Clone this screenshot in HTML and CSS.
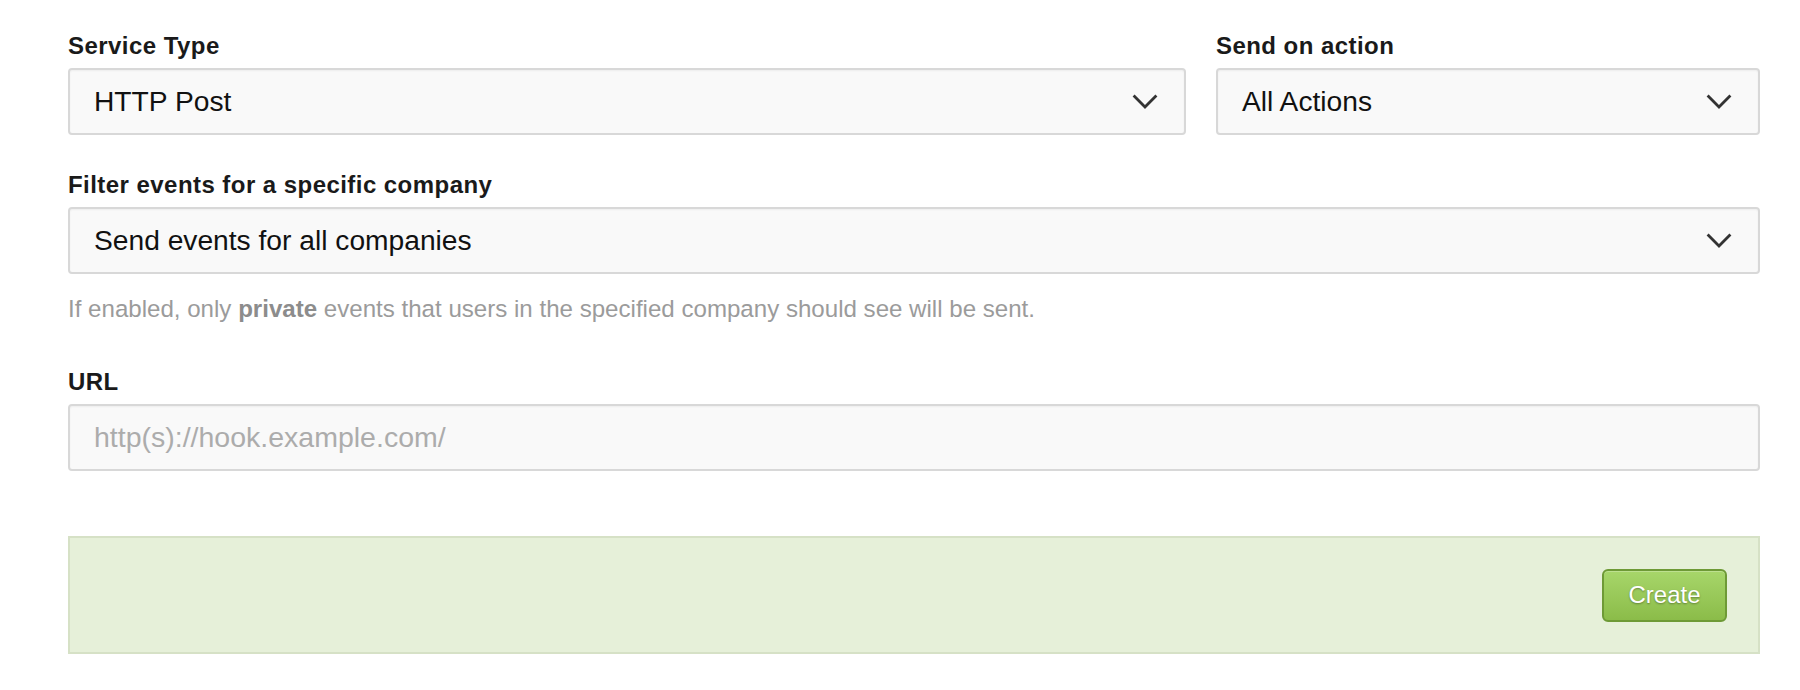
FILE: index.html
```html
<!DOCTYPE html>
<html lang="en">
<head>
<meta charset="utf-8">
<title>Webhook</title>
<link rel="stylesheet" href="styles.css">
</head>
<body>
<form class="form">
  <div class="row">
    <div class="field col-wide">
      <label class="label">Service Type</label>
      <div class="select">
        <span class="select-text">HTTP Post</span>
        <svg class="chevron" width="26" height="15" viewBox="0 0 26 15"><path d="M1.6 1.6 L13 13 L24.4 1.6" fill="none" stroke="#333" stroke-width="2.8"/></svg>
      </div>
    </div>
    <div class="field col-narrow">
      <label class="label">Send on action</label>
      <div class="select">
        <span class="select-text">All Actions</span>
        <svg class="chevron" width="26" height="15" viewBox="0 0 26 15"><path d="M1.6 1.6 L13 13 L24.4 1.6" fill="none" stroke="#333" stroke-width="2.8"/></svg>
      </div>
    </div>
  </div>

  <div class="field">
    <label class="label">Filter events for a specific company</label>
    <div class="select">
      <span class="select-text">Send events for all companies</span>
      <svg class="chevron" width="26" height="15" viewBox="0 0 26 15"><path d="M1.6 1.6 L13 13 L24.4 1.6" fill="none" stroke="#333" stroke-width="2.8"/></svg>
    </div>
    <p class="help">If enabled, only <strong>private</strong> events that users in the specified company should see will be sent.</p>
  </div>

  <div class="field">
    <label class="label">URL</label>
    <input class="input" type="text" placeholder="http(s)://hook.example.com/">
  </div>

  <div class="actions">
    <button class="btn-create" type="button">Create</button>
  </div>
</form>
</body>
</html>
```

FILE: styles.css
```css
html, body {
  margin: 0;
  padding: 0;
  background: #ffffff;
}

body {
  font-family: "Liberation Sans", Arial, Helvetica, sans-serif;
  color: #111111;
}

.form {
  padding: 32px 40px 0 68px;
  display: flex;
  flex-direction: column;
}

.row {
  display: grid;
  grid-template-columns: 1118px 1fr;
  column-gap: 30px;
}

.field {
  display: flex;
  flex-direction: column;
  margin-bottom: 36px;
}

.label {
  font-size: 24px;
  line-height: 28px;
  font-weight: 700;
  color: #1a1a1a;
  margin-bottom: 8px;
  letter-spacing: 0.45px;
}

.select,
.input {
  box-sizing: border-box;
  height: 67px;
  border: 2px solid #d8d8d8;
  border-radius: 4px;
  background: #f9f9f9;
  box-shadow: inset 0 1px 2px rgba(0, 0, 0, 0.05);
}

.select {
  display: flex;
  align-items: center;
  justify-content: space-between;
  padding: 0 26px 0 24px;
}

.select-text {
  font-size: 28.2px;
  color: #111111;
}

.chevron {
  display: block;
}

.input {
  width: 100%;
  padding: 0 24px;
  font-family: "Liberation Sans", Arial, Helvetica, sans-serif;
  font-size: 28.5px;
  color: #111111;
  outline: none;
  -webkit-appearance: none;
  appearance: none;
}

.input::placeholder {
  color: #acacac;
}

.help {
  margin: 21px 0 9px 0;
  font-size: 24.1px;
  line-height: 28px;
  color: #9b9b9b;
}

.help strong {
  font-weight: 700;
  color: #8c8c8c;
}

.actions {
  margin-top: 29px;
  box-sizing: border-box;
  height: 118px;
  border: 2px solid #d6e1c6;
  background: #e6f0d9;
  display: flex;
  align-items: center;
  justify-content: flex-end;
  padding-right: 31px;
}

.btn-create {
  box-sizing: border-box;
  width: 125px;
  height: 53px;
  border: 2px solid #6e9a36;
  border-radius: 6px;
  background: linear-gradient(to bottom, #a7d66a 0%, #8bbc49 100%);
  box-shadow: inset 0 1px 0 rgba(255, 255, 255, 0.25);
  color: #ffffff;
  font-family: "Liberation Sans", Arial, Helvetica, sans-serif;
  font-size: 24px;
  text-shadow: 0 1px 2px rgba(0, 0, 0, 0.35);
  cursor: pointer;
  padding: 0;
}
```
